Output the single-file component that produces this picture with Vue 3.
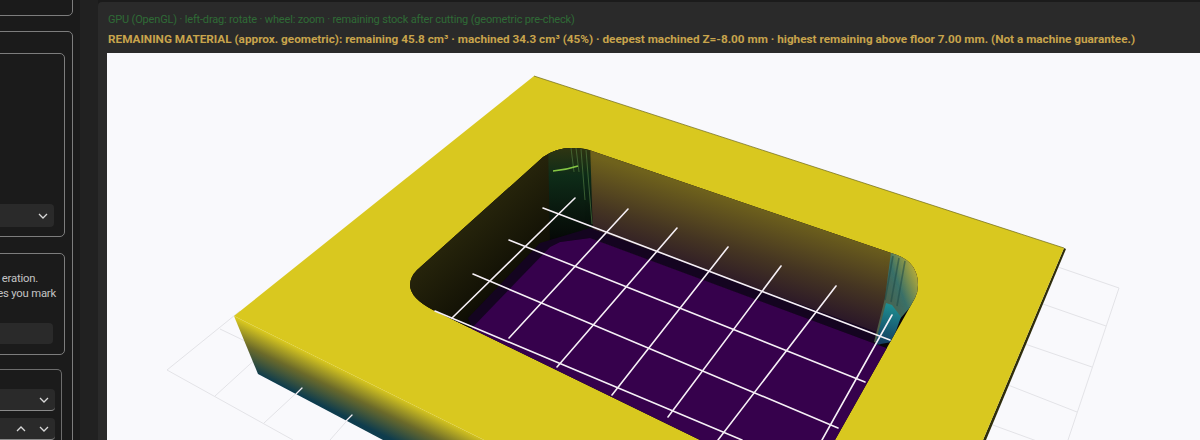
<script setup>
const whiteLines = [
  [575, 198, 452, 318],
  [628, 209, 509, 338],
  [677, 228, 557, 367],
  [728, 247, 612, 395],
  [781, 266, 668, 417],
  [836, 286, 718, 440],
  [892, 315, 822, 440],
  [543, 208, 890, 340],
  [509, 240, 865, 382],
  [473, 274, 838, 428],
  [435, 311, 742, 440],
]
const groundLines = [
  [167, 370, 240, 311],
  [167, 370, 293, 440],
  [215, 396, 260, 355],
  [264, 423, 305, 385],
  [330, 440, 352, 415],
  [220, 329, 245, 341],
  [1055, 266, 1119, 288],
  [1119, 288, 1068, 440],
  [1040, 303, 1106, 326],
  [1025, 344, 1092, 367],
  [1008, 385, 1077, 412],
  [990, 424, 1045, 444],
]
const cornerStreaks = [
  [571, 148, 574, 172],
  [576, 148, 579, 172],
  [581, 149, 585, 200],
  [586, 150, 592, 224],
]
const tealStreaks = [
  [893, 256, 885, 300],
  [899, 258, 891, 302],
  [905, 261, 897, 306],
]
</script>

<template>
  <div class="app">
    <aside class="sidebar">
      <div class="card top-card"></div>
      <div class="card outer-card">
        <div class="card inner-card">
          <div class="select"><svg class="chev" viewBox="0 0 10 6"><path d="M1 1l4 4 4-4" /></svg></div>
        </div>
        <div class="card note-card">
          <p class="note"><span class="line-a">eration.</span><span class="line-b">es you mark</span></p>
          <div class="input"></div>
        </div>
        <div class="group">
          <div class="select field"><svg class="chev" viewBox="0 0 10 6"><path d="M1 1l4 4 4-4" /></svg></div>
          <div class="select field spin">
            <svg class="chev" viewBox="0 0 10 6"><path d="M1 5l4-4 4 4" /></svg>
            <svg class="chev" viewBox="0 0 10 6"><path d="M1 1l4 4 4-4" /></svg>
          </div>
        </div>
      </div>
    </aside>
    <div class="splitter"></div>
    <main class="panel">
      <div class="hint">GPU (OpenGL) · left-drag: rotate · wheel: zoom · remaining stock after cutting (geometric pre-check)</div>
      <div class="warning">REMAINING MATERIAL (approx. geometric): remaining 45.8 cm³ · machined 34.3 cm³ (45%) · deepest machined Z=-8.00 mm · highest remaining above floor 7.00 mm. (Not a machine guarantee.)</div>
      <div class="viewport">
        <svg viewBox="107 53 1093 387" class="scene" aria-label="Remaining stock 3D view">
          <defs>
            <linearGradient id="side" gradientUnits="userSpaceOnUse" x1="300" y1="349" x2="282" y2="386">
              <stop offset="0" stop-color="#d9c81f" />
              <stop offset="0.5" stop-color="#6b6a2a" />
              <stop offset="1" stop-color="#0e3c4d" />
            </linearGradient>
            <linearGradient id="backWall" gradientUnits="userSpaceOnUse" x1="740" y1="201" x2="712" y2="293">
              <stop offset="0" stop-color="#6f621c" />
              <stop offset="0.5" stop-color="#453522" />
              <stop offset="1" stop-color="#220e2a" />
            </linearGradient>
            <linearGradient id="leftWall" gradientUnits="userSpaceOnUse" x1="480" y1="213" x2="540" y2="280">
              <stop offset="0" stop-color="#26240b" />
              <stop offset="0.7" stop-color="#121105" />
              <stop offset="1" stop-color="#050404" />
            </linearGradient>
            <linearGradient id="cornerWall" gradientUnits="userSpaceOnUse" x1="570" y1="148" x2="570" y2="240">
              <stop offset="0" stop-color="#2f3512" />
              <stop offset="0.3" stop-color="#0e2c18" />
              <stop offset="1" stop-color="#050806" />
            </linearGradient>
            <linearGradient id="tealWall" gradientUnits="userSpaceOnUse" x1="878" y1="292" x2="918" y2="276">
              <stop offset="0" stop-color="#4d5f48" />
              <stop offset="0.5" stop-color="#3a7068" />
              <stop offset="1" stop-color="#b2a93a" />
            </linearGradient>
            <linearGradient id="tealLow" gradientUnits="userSpaceOnUse" x1="890" y1="304" x2="880" y2="345">
              <stop offset="0" stop-color="#1e8e90" />
              <stop offset="1" stop-color="#143a5e" />
            </linearGradient>
            <clipPath id="pocket">
              <path d="M433 310 Q410 298 410 285 Q410 277 417 270 L543 157 Q557 147 575 148 Q585 148 595 152 L897 255 Q918 263 918 285 Q918 292 915 298 L835 440 L700 440 Z" />
            </clipPath>
          </defs>

          <line v-for="(l, i) in groundLines" :key="`g-${i}`" :x1="l[0]" :y1="l[1]" :x2="l[2]" :y2="l[3]" class="ground" />

          <polygon points="234,316 258,374 383,440 484,440" fill="url(#side)" />
          <polygon points="1064,248 1066,249 986,440 983,440" fill="#2f2d0c" />
          <polygon points="534,76 1064,248 983,440 484,440 234,316" fill="#d9c81f" />
          <line x1="534" y1="76" x2="1064" y2="248" stroke="#6b6614" stroke-width="0.7" />

          <g clip-path="url(#pocket)">
            <rect x="400" y="140" width="530" height="300" fill="#0a0608" />
            <polygon points="400,285 543,140 575,140 575,240 550,247 468,330 430,320" fill="url(#leftWall)" />
            <polygon points="588,140 930,257 880,345 590,238" fill="url(#backWall)" />
            <polygon points="548,140 590,140 593,238 550,247" fill="url(#cornerWall)" />
            <line v-for="(l, i) in cornerStreaks" :key="`c-${i}`" :x1="l[0]" :y1="l[1]" :x2="l[2]" :y2="l[3]" class="streak" />
            <path d="M553 171 Q566 170 578 166" stroke="#84c544" stroke-width="1.6" fill="none" />
            <polygon points="468,318 540,243 590,228 882,334 873,343 590,238 560,242 550,247 473,330" fill="#140420" />
            <polygon points="550,247 560,242 590,238 873,343 905,355 840,460 640,440 470,330" fill="#36014c" />
            <polygon points="891,252 925,262 925,290 880,342 874,342 885,298" fill="url(#tealWall)" />
            <line v-for="(l, i) in tealStreaks" :key="`t-${i}`" :x1="l[0]" :y1="l[1]" :x2="l[2]" :y2="l[3]" class="teal-streak" />
            <polygon points="886,303 892,305 901,317 892,342 875,345" fill="url(#tealLow)" />
          </g>

          <line v-for="(l, i) in whiteLines" :key="`w-${i}`" :x1="l[0]" :y1="l[1]" :x2="l[2]" :y2="l[3]" class="grid" />
          <line x1="302" y1="388" x2="296" y2="394" class="grid thin" />
          <line x1="352" y1="415" x2="346" y2="421" class="grid thin" />
        </svg>
      </div>
    </main>
  </div>
</template>

<style scoped>
.app { display: flex; width: 1200px; height: 440px; overflow: hidden; background: #1b1b1b; font-family: Roboto, "Open Sans", sans-serif; }
.sidebar { flex: 0 0 73px; width: 73px; min-width: 0; display: flex; flex-direction: column; gap: 15px; margin-top: -40px; }
.card { border: 1px solid #7d7d7d; border-radius: 5px; box-sizing: border-box; margin-left: -12px; }
.top-card { flex: 0 0 56px; }
.outer-card { flex: 0 0 auto; height: 480px; padding: 21px 7px 0 0; display: flex; flex-direction: column; gap: 16px; }
.inner-card { height: 184px; display: flex; flex-direction: column; justify-content: flex-end; padding: 0 10px 9px 0; }
.select { height: 23px; background: #2a2a2a; border-radius: 4px; display: flex; align-items: center; justify-content: flex-end; gap: 13px; padding-right: 6px; }
.chev { width: 10px; height: 6px; fill: none; stroke: #d8d8d8; stroke-width: 1.3; }
.note-card { height: 102px; padding: 17px 8px 0 0; overflow: hidden; }
.note { margin: 0; font-size: 11.3px; letter-spacing: -0.2px; line-height: 15px; color: #c4c4c4; white-space: nowrap; display: flex; flex-direction: column; align-items: flex-end; }
.line-a { margin-right: 18px; }
.input { height: 21px; margin: 22px 3px 0 0; background: #2a2a2a; border-radius: 4px; }
.group { margin: -2px 3px 0 -12px; height: 90px; border: 1px solid #6d6d6d; border-width: 1px 1px 0 0; border-radius: 0 5px 0 0; padding: 19px 6px 0 0; display: flex; flex-direction: column; gap: 7px; }
.field { flex: 0 0 22px; height: 22px; border-bottom: 1px solid #8a8a8a; box-sizing: border-box; }
.splitter { flex: 0 0 25px; box-sizing: border-box; border-left: 7px solid #1b1b1b; background: #212121; }
.panel { flex: 1; display: flex; flex-direction: column; margin-top: 2px; padding-left: 9px; background: #2a2a2a; border-radius: 4px 0 0 0; min-width: 0; }
.hint { height: 27px; padding: 10px 0 0 1px; box-sizing: border-box; font-size: 11px; letter-spacing: -0.17px; line-height: 16px; color: #2f6b36; white-space: nowrap; }
.warning { height: 24px; padding-left: 1px; font-size: 11.75px; line-height: 21px; font-weight: 700; color: #c8a44c; white-space: nowrap; }
.viewport { flex: 1; background: #f9f9fc; min-height: 0; }
.scene { display: block; width: 1093px; height: 387px; }
.ground { stroke: #e3e3e7; stroke-width: 1; }
.grid { stroke: #f6f0f6; stroke-width: 1.6; stroke-linecap: round; }
.grid.thin { stroke-width: 1.2; }
.streak { stroke: #5d8a4a; stroke-width: 0.8; opacity: 0.7; }
.teal-streak { stroke: #1f4a46; stroke-width: 1.6; opacity: 0.55; }
</style>
